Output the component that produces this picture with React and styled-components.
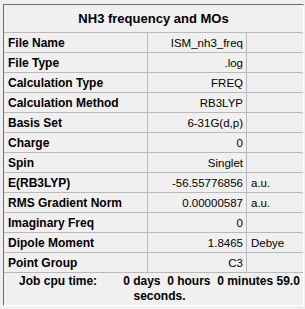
import React from "react";
import styled, { createGlobalStyle } from "styled-components";

const GlobalStyle = createGlobalStyle`
  html, body {
    margin: 0;
    padding: 0;
    background: #f0f0f0;
  }
  body {
    font-family: "Liberation Sans", Arial, sans-serif;
    font-size: 12px;
    color: #000;
  }
`;

const rows = [
  { label: "File Name", value: "ISM_nh3_freq" },
  { label: "File Type", value: ".log" },
  { label: "Calculation Type", value: "FREQ" },
  { label: "Calculation Method", value: "RB3LYP" },
  { label: "Basis Set", value: "6-31G(d,p)" },
  { label: "Charge", value: "0" },
  { label: "Spin", value: "Singlet" },
  { label: "E(RB3LYP)", value: "-56.55776856", unit: "a.u." },
  { label: "RMS Gradient Norm", value: "0.00000587", unit: "a.u." },
  { label: "Imaginary Freq", value: "0" },
  { label: "Dipole Moment", value: "1.8465", unit: "Debye" },
  { label: "Point Group", value: "C3" },
];

const Page = styled.div`
  padding: 4px 0 0 3px;
`;

// sunken panel around the summary grid
const Panel = styled.div`
  width: 299px;
  border-top: 1px solid #6e6e6e;
  border-left: 1px solid #6e6e6e;
  border-right: 1px solid #ffffff;
  border-bottom: 1px solid #ffffff;
  background: #f0f0f0;
`;

const Title = styled.div`
  height: 27px;
  display: flex;
  align-items: center;
  justify-content: center;
  font-weight: bold;
  font-size: 13px;
  border-bottom: 1px solid #b9b9b9;
`;

const Row = styled.div`
  display: grid;
  grid-template-columns: 144px 99px 1fr;
  height: 19px;
  border-bottom: 1px solid #b9b9b9;
`;

const Cell = styled.div`
  display: flex;
  align-items: center;
  padding: 0 ${(p) => (p.$align === "right" ? "3px" : "4px")};
  justify-content: ${(p) => (p.$align === "right" ? "flex-end" : "flex-start")};
  font-weight: ${(p) => (p.$bold ? "bold" : "normal")};
  font-size: ${(p) => (p.$bold ? "12px" : "11.5px")};
  border-right: ${(p) => (p.$last ? "none" : "1px solid #b9b9b9")};
  white-space: nowrap;
  overflow: hidden;
`;

const Footer = styled.div`
  height: 32px;
  display: flex;
  flex-direction: column;
  align-items: center;
  justify-content: center;
  font-weight: bold;
  line-height: 15px;
  padding-left: 12px;
`;

const FooterLine = styled.div`
  white-space: pre;
`;

const Gap = styled.span`
  display: inline-block;
  width: ${(p) => p.$w}px;
`;

export default function App() {
  return (
    <>
      <GlobalStyle />
      <Page>
        <Panel>
          <Title>NH3 frequency and MOs</Title>
          {rows.map((r) => (
            <Row key={r.label}>
              <Cell $bold>{r.label}</Cell>
              <Cell $align="right">{r.value}</Cell>
              <Cell $last>{r.unit}</Cell>
            </Row>
          ))}
          <Footer>
            <FooterLine>
              Job cpu time:<Gap $w={26} />0 days  0 hours  0 minutes 59.0
            </FooterLine>
            <FooterLine>seconds.</FooterLine>
          </Footer>
        </Panel>
      </Page>
    </>
  );
}
